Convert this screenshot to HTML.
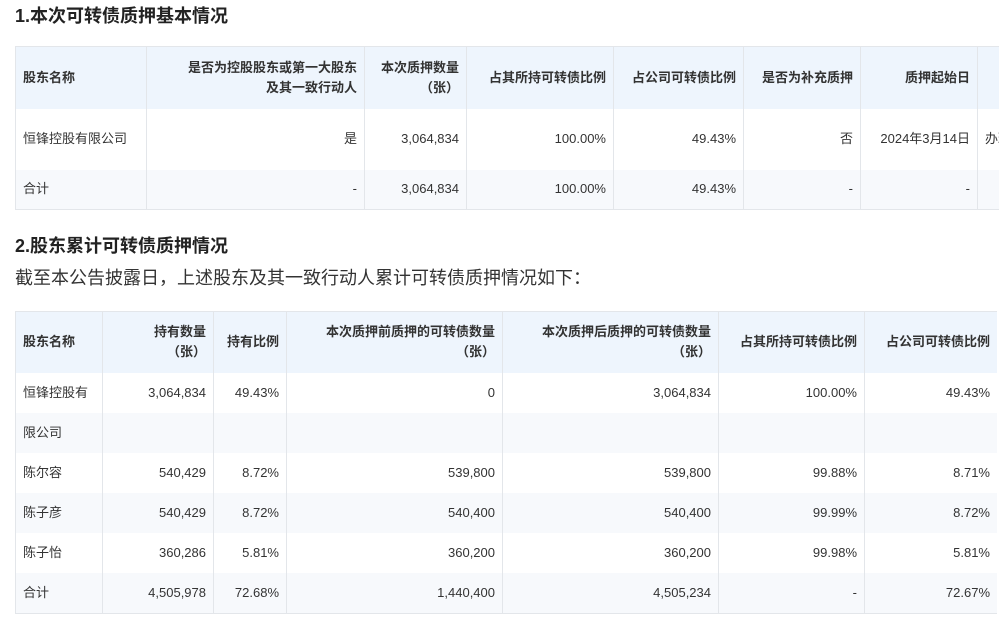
<!DOCTYPE html>
<html><head><meta charset="utf-8"><style>
body{margin:0;background:#fff;font-family:"Liberation Sans","Noto Sans CJK SC",sans-serif;color:#333;width:999px;height:620px;overflow:hidden;position:relative}
h3{position:absolute;margin:0;font-size:18px;font-weight:bold;color:#222;left:15px}
p{position:absolute;margin:0;left:15px;font-size:18px;color:#333}
.wrap{position:absolute;overflow:hidden}
table{border-collapse:collapse;table-layout:fixed;font-size:13px;border:1px solid #e3e6ea}
td,th{border-left:1px solid #e3e6ea;border-right:1px solid #e3e6ea;padding:0 7px;text-align:right;line-height:20px;overflow:hidden;white-space:nowrap}
th{background:#eef5fd;font-weight:bold;color:#333}
td:first-child,th:first-child{text-align:left}
tr.g td{background:#f7f9fc}
</style></head><body>
<h3 style="top:2px">1.本次可转债质押基本情况</h3>
<div class="wrap" style="left:15px;top:46px;width:984px;height:165px">
<table style="width:1100px">
<colgroup><col style="width:131px"><col style="width:218px"><col style="width:102px"><col style="width:147px"><col style="width:130px"><col style="width:117px"><col style="width:117px"><col style="width:138px"></colgroup>
<tr style="height:62px"><th>股东名称</th><th>是否为控股股东或第一大股东<br>及其一致行动人</th><th>本次质押数量<br>（张）</th><th>占其所持可转债比例</th><th>占公司可转债比例</th><th>是否为补充质押</th><th>质押起始日</th><th>质押到期日</th></tr>
<tr style="height:61px"><td>恒锋控股有限公司</td><td>是</td><td>3,064,834</td><td>100.00%</td><td>49.43%</td><td>否</td><td>2024年3月14日</td><td style="text-align:left">办理解除质押</td></tr>
<tr class="g" style="height:40px"><td>合计</td><td>-</td><td>3,064,834</td><td>100.00%</td><td>49.43%</td><td>-</td><td>-</td><td>-</td></tr>
</table></div>
<h3 style="top:232px">2.股东累计可转债质押情况</h3>
<p style="top:264px">截至本公告披露日，上述股东及其一致行动人累计可转债质押情况如下：</p>
<div class="wrap" style="left:15px;top:311px;width:982px;height:305px">
<table style="width:982px">
<colgroup><col style="width:87px"><col style="width:111px"><col style="width:73px"><col style="width:216px"><col style="width:216px"><col style="width:146px"><col style="width:133px"></colgroup>
<tr style="height:61px"><th>股东名称</th><th>持有数量<br>（张）</th><th>持有比例</th><th>本次质押前质押的可转债数量<br>（张）</th><th>本次质押后质押的可转债数量<br>（张）</th><th>占其所持可转债比例</th><th>占公司可转债比例</th></tr>
<tr style="height:40px"><td>恒锋控股有</td><td>3,064,834</td><td>49.43%</td><td>0</td><td>3,064,834</td><td>100.00%</td><td>49.43%</td></tr>
<tr class="g" style="height:40px"><td>限公司</td><td></td><td></td><td></td><td></td><td></td><td></td></tr>
<tr style="height:40px"><td>陈尔容</td><td>540,429</td><td>8.72%</td><td>539,800</td><td>539,800</td><td>99.88%</td><td>8.71%</td></tr>
<tr class="g" style="height:40px"><td>陈子彦</td><td>540,429</td><td>8.72%</td><td>540,400</td><td>540,400</td><td>99.99%</td><td>8.72%</td></tr>
<tr style="height:40px"><td>陈子怡</td><td>360,286</td><td>5.81%</td><td>360,200</td><td>360,200</td><td>99.98%</td><td>5.81%</td></tr>
<tr class="g" style="height:41px"><td>合计</td><td>4,505,978</td><td>72.68%</td><td>1,440,400</td><td>4,505,234</td><td>-</td><td>72.67%</td></tr>
</table></div>
</body></html>
